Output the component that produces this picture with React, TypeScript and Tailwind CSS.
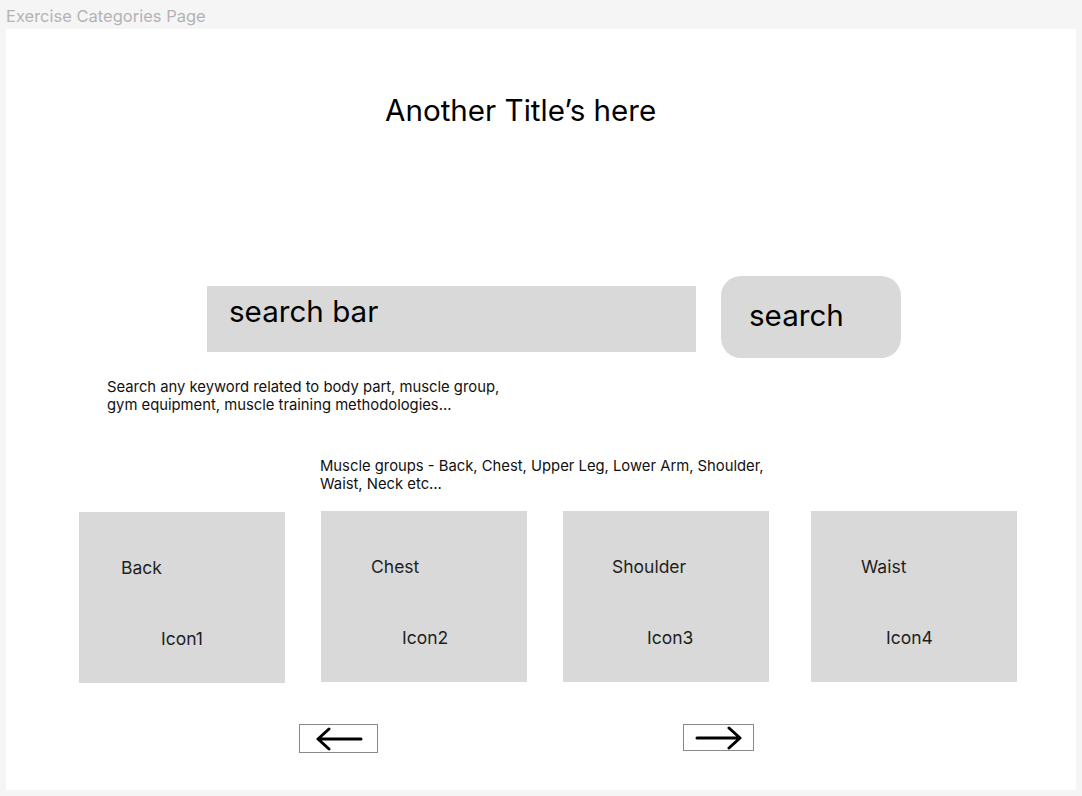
import React from 'react';

// --- data ---
const groups = [
  { name: 'Back', icon: 'Icon1', cls: 'ml-[73px] mt-px', nameCls: 'ml-[42px]', iconCls: 'ml-[82px]' },
  { name: 'Chest', icon: 'Icon2', cls: 'ml-[36px]', nameCls: 'ml-[50px]', iconCls: 'ml-[81px]' },
  { name: 'Shoulder', icon: 'Icon3', cls: 'ml-[36px]', nameCls: 'ml-[49px]', iconCls: 'ml-[84px]' },
  { name: 'Waist', icon: 'Icon4', cls: 'ml-[42px]', nameCls: 'ml-[50px]', iconCls: 'ml-[75px]' },
];

const ArrowBox: React.FC<{ dir: 'left' | 'right'; className?: string }> = ({ dir, className = '' }) => (
  <div className={`flex items-center justify-center border border-[#8a8a8a] bg-white ${className}`}>
    <svg width="50" height="24" viewBox="0 0 50 24" fill="none" stroke="#000" strokeWidth="3" strokeLinecap="round" strokeLinejoin="round">
      {dir === 'left' ? (
        <path d="M47 12H4M15 2L4 12l11 10" />
      ) : (
        <path d="M3 12h43M35 2l11 10-11 10" />
      )}
    </svg>
  </div>
);

const CategoryCard: React.FC<(typeof groups)[number]> = ({ name, icon, cls, nameCls, iconCls }) => (
  <div className={`w-[206px] h-[171px] bg-[#d9d9d9] flex flex-col ${cls}`}>
    <span className={`mt-[46px] text-[17.5px] leading-[20px] text-[#1e1e1e] ${nameCls}`}>{name}</span>
    <span className={`mt-[51px] text-[17.5px] leading-[20px] text-[#1e1e1e] ${iconCls}`}>{icon}</span>
  </div>
);

export default function App() {
  return (
    <div className="w-[1082px] h-[796px] bg-[#f5f5f5] overflow-hidden font-['Inter','Noto_Sans',sans-serif]">
      <div className="h-[29px] pl-[6px] pt-[6px] text-[16.5px] leading-[20px] text-[#b3b3b3]">Exercise Categories Page</div>

      <div className="ml-[6px] w-[1070px] h-[761px] bg-white flex flex-col">
        <h1 className="ml-[379px] mt-[63px] text-[29.6px] leading-[36px] text-black">Another Title’s here</h1>

        {/* search */}
        <div className="mt-[148px] ml-[201px] flex items-start gap-[25px]">
          <div className="mt-[10px] w-[489px] h-[66px] bg-[#d9d9d9] pl-[22px] pt-[7px] text-[29.6px] leading-[36px] text-black">search bar</div>
          <button className="w-[180px] h-[82px] rounded-[20px] bg-[#d9d9d9] text-left pl-[28px] pb-[5px] text-[29.6px] leading-[36px] text-black">search</button>
        </div>

        <p className="mt-[20px] ml-[101px] text-[14.8px] leading-[18px] text-[#111]">
          Search any keyword related to body part, muscle group,<br />
          gym equipment, muscle training methodologies...
        </p>

        <p className="mt-[43px] ml-[314px] text-[14.8px] leading-[18px] text-[#111]">
          Muscle groups - Back, Chest, Upper Leg, Lower Arm, Shoulder,<br />
          Waist, Neck etc...
        </p>

        <div className="mt-[18px] flex items-start">
          {groups.map(g => <CategoryCard key={g.name} {...g} />)}
        </div>

        <div className="mt-[41px] flex items-start">
          <ArrowBox dir="left" className="ml-[293px] w-[79px] h-[29px]" />
          <ArrowBox dir="right" className="ml-[305px] w-[71px] h-[27px]" />
        </div>
      </div>
    </div>
  );
}
